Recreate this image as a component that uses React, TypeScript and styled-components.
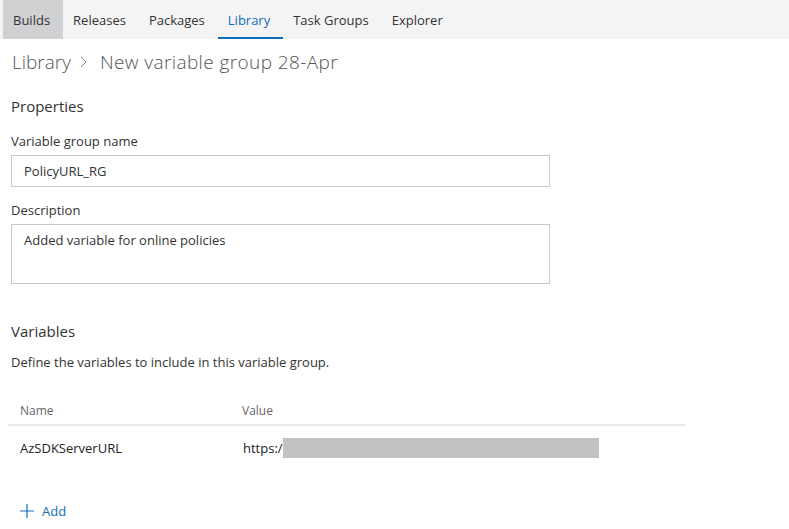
import React from 'react'
import styled, { createGlobalStyle } from 'styled-components'

const GlobalStyle = createGlobalStyle`
  html, body {
    margin: 0;
    padding: 0;
    background: #ffffff;
    font-family: "Open Sans", "Noto Sans", "Liberation Sans", sans-serif;
    color: #333333;
  }
`

const Page = styled.div`
  width: 789px;
  height: 529px;
  overflow: hidden;
`

const NavBar = styled.nav`
  display: flex;
  height: 39px;
  background: #f4f4f4;
  padding-left: 3px;
`

const Tab = styled.div<{ $active?: boolean; $selected?: boolean }>`
  display: flex;
  align-items: center;
  padding: 2px 13px 0 10px;
  font-size: 13px;
  color: ${(p) => (p.$active ? '#106ebe' : '#333333')};
  background: ${(p) => (p.$selected ? '#d0d1d3' : 'transparent')};
  border-bottom: 2px solid ${(p) => (p.$active ? '#106ebe' : 'transparent')};
`

const Content = styled.main`
  padding: 0 0 0 11px;
`

const Breadcrumb = styled.h1`
  display: flex;
  align-items: center;
  margin: 9px 0 0 1px;
  height: 27px;
  font-size: 19px;
  font-weight: 300;
  color: #555555;
`

const Crumb = styled.span<{ $spacing?: number }>`
  letter-spacing: ${(p) => p.$spacing ?? 0}px;
`

const Chevron = styled.span`
  display: flex;
  margin: 0 13px 0 9px;
`

const SectionTitle = styled.h2<{ $top: number }>`
  margin: ${(p) => p.$top}px 0 0 0;
  font-size: 15px;
  font-weight: 400;
  color: #333333;
  line-height: 20px;
`

const FieldLabel = styled.label<{ $top: number }>`
  display: block;
  margin-top: ${(p) => p.$top}px;
  font-size: 13px;
  line-height: 18px;
  color: #333333;
`

const TextBox = styled.div<{ $height: number; $center?: boolean }>`
  box-sizing: border-box;
  width: 539px;
  height: ${(p) => p.$height}px;
  margin-top: 5px;
  border: 1px solid #c8c8c8;
  padding: ${(p) => (p.$center ? '0 12px' : '6px 12px')};
  display: flex;
  align-items: ${(p) => (p.$center ? 'center' : 'flex-start')};
  font-size: 13px;
  color: #333333;
`

const Hint = styled.p`
  margin: 12px 0 0 0;
  font-size: 13px;
  line-height: 18px;
`

const Table = styled.div`
  margin-top: 26px;
  margin-left: -3px;
  width: 677px;
`

const Row = styled.div<{ $header?: boolean }>`
  display: grid;
  grid-template-columns: 222px 1fr;
  align-items: center;
  padding-left: 12px;
  height: ${(p) => (p.$header ? '27px' : '44px')};
  border-bottom: ${(p) => (p.$header ? '2px solid #eaeaea' : 'none')};
  font-size: ${(p) => (p.$header ? '12px' : '13px')};
  color: ${(p) => (p.$header ? '#666666' : '#222222')};
`

const ValueCell = styled.div`
  display: flex;
  align-items: center;
  padding-left: 1px;
`

const Redacted = styled.span`
  display: inline-block;
  width: 316px;
  height: 20px;
  background: #c2c2c2;
`

const AddButton = styled.div`
  display: flex;
  align-items: center;
  gap: 8px;
  margin-top: 32px;
  margin-left: 9px;
  font-size: 13px;
  color: #106ebe;
`

const tabs = ['Builds', 'Releases', 'Packages', 'Library', 'Task Groups', 'Explorer']

export default function App() {
  return (
    <Page>
      <GlobalStyle />
      <NavBar>
        {tabs.map((t) => (
          <Tab key={t} $selected={t === 'Builds'} $active={t === 'Library'}>
            {t}
          </Tab>
        ))}
      </NavBar>
      <Content>
        <Breadcrumb>
          <Crumb>Library</Crumb>
          <Chevron>
            <svg width="7" height="12" viewBox="0 0 7 12">
              <path d="M1 1 L6 6 L1 11" fill="none" stroke="#888888" strokeWidth="1" />
            </svg>
          </Chevron>
          <Crumb $spacing={0.4}>New variable group 28-Apr</Crumb>
        </Breadcrumb>
        <SectionTitle $top={21}>Properties</SectionTitle>
        <FieldLabel $top={16}>Variable group name</FieldLabel>
        <TextBox $height={32} $center>PolicyURL_RG</TextBox>
        <FieldLabel $top={14}>Description</FieldLabel>
        <TextBox $height={60}>Added variable for online policies</TextBox>
        <SectionTitle $top={37}>Variables</SectionTitle>
        <Hint>Define the variables to include in this variable group.</Hint>
        <Table>
          <Row $header>
            <div>Name</div>
            <div>Value</div>
          </Row>
          <Row>
            <div>AzSDKServerURL</div>
            <ValueCell>
              https:/<Redacted />
            </ValueCell>
          </Row>
        </Table>
        <AddButton>
          <svg width="14" height="14" viewBox="0 0 14 14">
            <path d="M7 0 V14 M0 7 H14" stroke="#106ebe" strokeWidth="1.2" />
          </svg>
          Add
        </AddButton>
      </Content>
    </Page>
  )
}
